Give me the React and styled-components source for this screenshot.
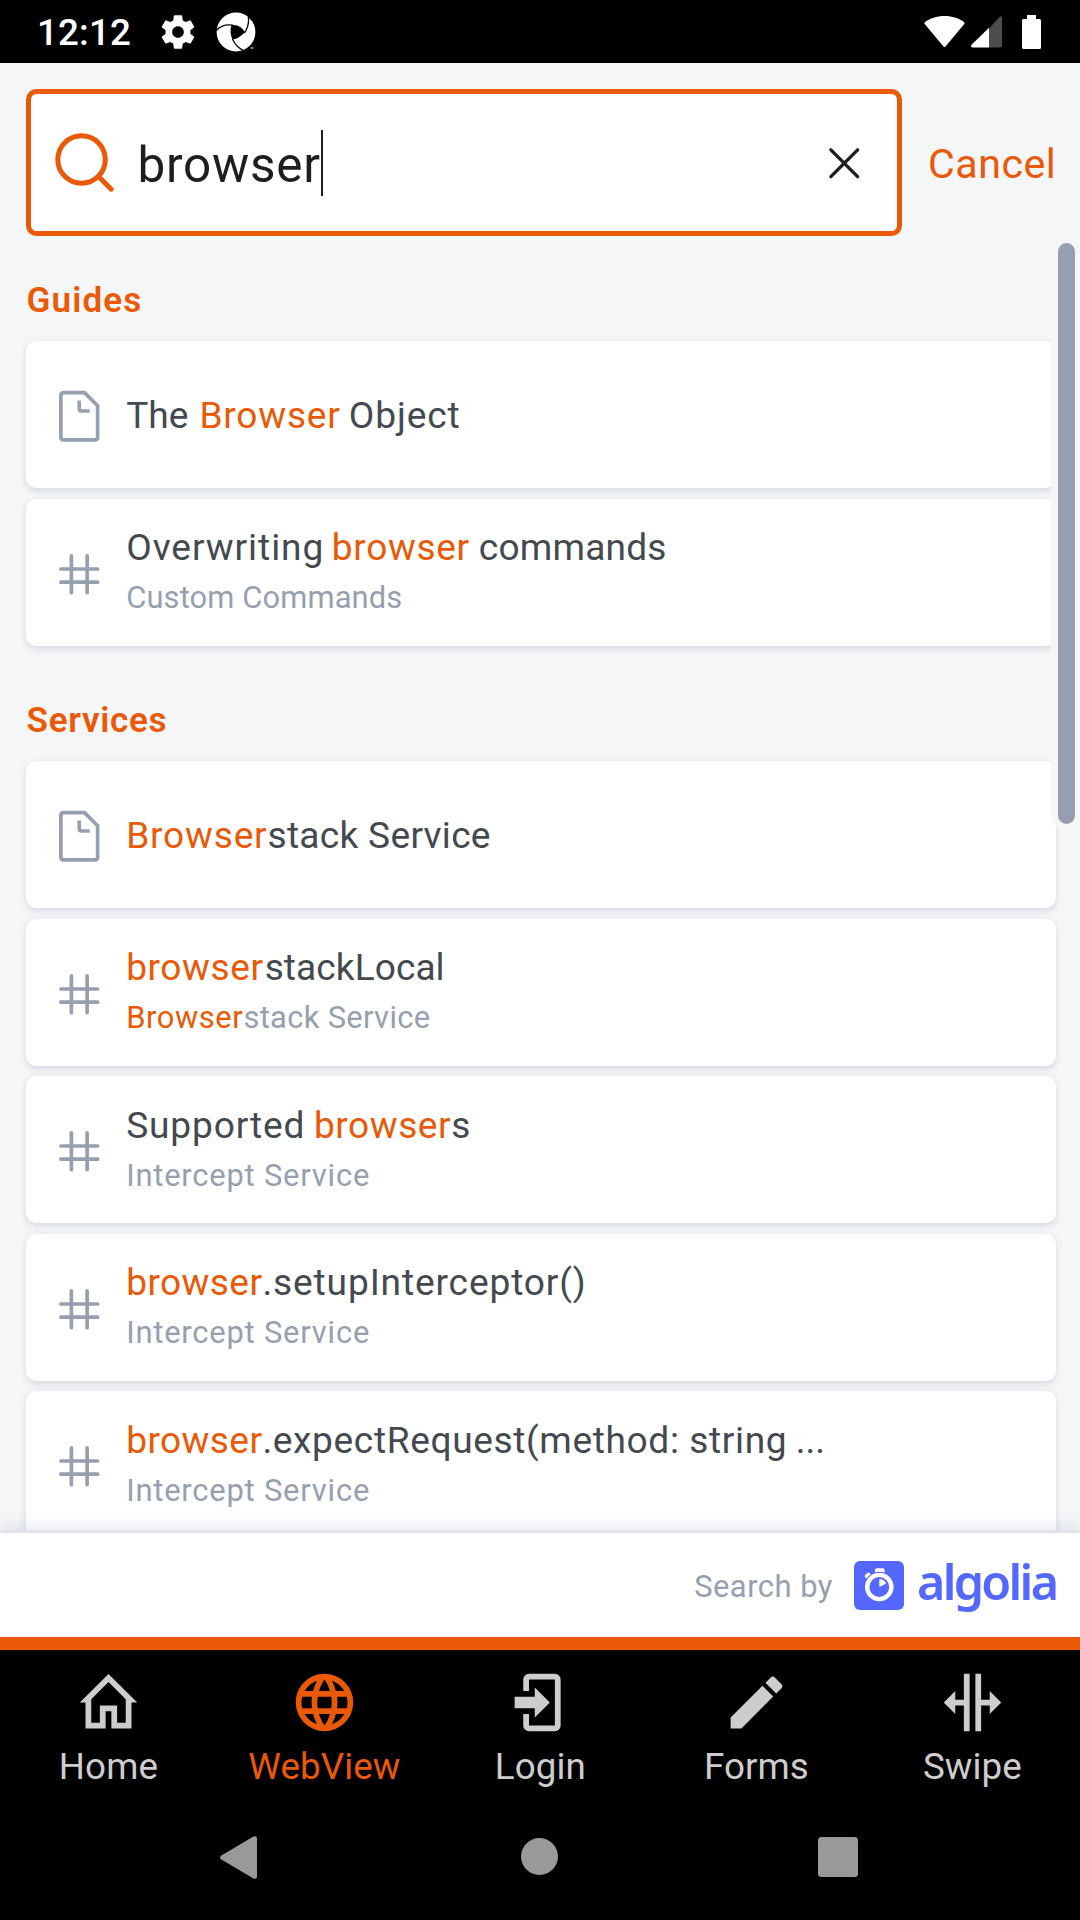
import React from "react";
import styled, { createGlobalStyle, ThemeProvider } from "styled-components";

const theme = {
  primary: "#ea5906",
  bg: "#f5f6f7",
  text: "#444950",
  ink: "#1c1e21",
  muted: "#969faf",
  brand: "#5468ff",
};

const GlobalStyle = createGlobalStyle`
  * { box-sizing: border-box; }
  body { margin: 0; background: #000; font-family: Roboto, "Liberation Sans", sans-serif; }
  svg { display: block; flex: none; }
`;

const Screen = styled.div`
  width: 1080px;
  height: 1920px;
  display: flex;
  flex-direction: column;
  overflow: hidden;
  background: ${(p) => p.theme.bg};
`;

/* ---------- status bar ---------- */

const StatusBar = styled.header`
  height: 63px;
  flex: none;
  display: flex;
  align-items: center;
  padding: 0 39px 0 37px;
  background: #000;
  color: #fff;
`;

const Clock = styled.span`
  width: 121px;
  padding-top: 3px;
  font-size: 36.75px;
  font-weight: 500;
  line-height: 40px;
  letter-spacing: 0.16px;
`;

const StatusIcons = styled.div`
  display: flex;
  align-items: center;
  gap: ${(p) => p.$gap}px;
  margin-left: ${(p) => (p.$end ? "auto" : 0)};
`;

const BatterySlot = styled.div`
  margin-left: 14px;
`;

/* ---------- search header ---------- */

const SearchHeader = styled.div`
  flex: none;
  display: flex;
  align-items: center;
  padding: 26px 0 0 26px;
`;

const SearchBox = styled.div`
  width: 876px;
  height: 147px;
  display: flex;
  align-items: center;
  padding: 0 27px 0 22px;
  border: 5px solid ${(p) => p.theme.primary};
  border-radius: 10.5px;
  background: #fff;
`;

const Query = styled.span`
  margin-left: 21.5px;
  padding-top: 5px;
  font-size: 49.5px;
  line-height: 66px;
  letter-spacing: 0.73px;
  color: ${(p) => p.theme.ink};
`;

const Caret = styled.i`
  width: 2px;
  height: 66px;
  background: ${(p) => p.theme.ink};
`;

const ClearButton = styled.button`
  display: flex;
  margin-left: auto;
  padding: 1px 0 0;
  border: 0;
  background: none;
  color: ${(p) => p.theme.ink};
`;

const CancelButton = styled.button`
  margin-left: 26px;
  padding: 3px 0 0;
  border: 0;
  background: none;
  font: 400 41.2px Roboto, sans-serif;
  letter-spacing: 0.5px;
  color: ${(p) => p.theme.primary};
`;

/* ---------- results ---------- */

const Results = styled.main`
  flex: 1;
  min-height: 0;
  position: relative;
  overflow: hidden;
  padding: 21px 24px 0 26px;
`;

const Section = styled.section`
  margin-bottom: 31.5px;
`;

const SectionTitle = styled.h2`
  margin: 0;
  height: 84px;
  padding: 1px 0 0 0.5px;
  font-size: 35.1px;
  line-height: 84px;
  font-weight: 600;
  letter-spacing: ${(p) => p.$track}px;
  color: ${(p) => p.theme.primary};
`;

const HitList = styled.div`
  display: flex;
  flex-direction: column;
  gap: 10.5px;
`;

const Hit = styled.article`
  height: 147px;
  flex: none;
  display: flex;
  align-items: center;
  padding-left: 26.8px;
  border-radius: 10.5px;
  background: #fff;
  box-shadow: 0 2.6px 7.9px 0 #d4d9e1;
`;

const HitIconBox = styled.div`
  padding-top: 4px;
  color: ${(p) => p.theme.muted};
`;

const HitText = styled.div`
  margin-left: 20.9px;
  padding-top: 2px;
  white-space: pre;
`;

const HitTitle = styled.div`
  padding-top: ${(p) => (p.$single ? 1 : 0)}px;
  font-size: 37.1px;
  line-height: 50px;
  color: ${(p) => p.theme.text};
`;

const HitPath = styled.div`
  font-size: 30.9px;
  line-height: 50px;
  color: ${(p) => p.theme.muted};
`;

const Run = styled.span`
  margin-left: ${(p) => p.$nudge || 0}px;
  letter-spacing: ${(p) => p.$track}px;
  color: ${(p) => (p.$mark ? p.theme.primary : "inherit")};
`;

const ScrollThumb = styled.div`
  position: absolute;
  top: 0;
  right: -1.5px;
  width: 30.5px;
  height: 595px;
  border: 7px solid ${(p) => p.theme.bg};
  border-radius: 16px;
  background: ${(p) => p.theme.muted};
`;

/* ---------- search footer ---------- */

const SearchFooter = styled.footer`
  height: 104px;
  flex: none;
  position: relative;
  z-index: 1;
  display: flex;
  align-items: center;
  justify-content: flex-end;
  padding-right: 24px;
  background: #fff;
  box-shadow: 0 -2.6px 0 0 #e0e3e8, 0 -7.9px 15.75px 0 rgba(69, 98, 155, 0.12);
`;

const SearchBy = styled.span`
  margin-right: 21px;
  padding-top: 2px;
  font-size: 30.9px;
  letter-spacing: 0.5px;
  color: ${(p) => p.theme.muted};
`;

const Wordmark = styled.span`
  width: 139px;
  margin-left: 13px;
  padding-bottom: 8px;
  font-family: "Noto Sans", "Open Sans", sans-serif;
  font-size: 48.5px;
  font-weight: 600;
  line-height: 60px;
  letter-spacing: -2.7px;
  color: ${(p) => p.theme.brand};
`;

/* ---------- bottom bars ---------- */

const TabBar = styled.nav`
  height: 157px;
  flex: none;
  display: grid;
  grid-template-columns: repeat(5, 1fr);
  border-top: 13px solid ${(p) => p.theme.primary};
  background: #000;
`;

const Tab = styled.div`
  display: flex;
  flex-direction: column;
  align-items: center;
  padding-top: 17.5px;
  font-size: 36.75px;
  line-height: 44px;
  letter-spacing: 0.1px;
  color: ${(p) => (p.$active ? p.theme.primary : "#cdcdcd")};
`;

const TabLabel = styled.span`
  margin: 8px 0 0 0.8px;
`;

const NavBar = styled.div`
  height: 126px;
  flex: none;
  display: grid;
  grid-template-columns: 301px 1fr 301px;
  align-items: center;
  padding-right: 2px;
  background: #000;
  color: #999;
`;

const NavButton = styled.div`
  display: flex;
  justify-content: ${(p) => p.$align};
  padding: ${(p) => p.$pad || 0};
`;

/* ---------- icons ---------- */

const GearIcon = () => (
  <svg width="40" height="40" viewBox="0 0 24 24" fill="#fff">
    <path d="M19.43 12.98c.04-.32.07-.64.07-.98s-.03-.66-.07-.98l2.11-1.65c.19-.15.24-.42.12-.64l-2-3.46c-.12-.22-.39-.3-.61-.22l-2.49 1c-.52-.4-1.08-.73-1.69-.98l-.38-2.65C14.46 2.18 14.25 2 14 2h-4c-.25 0-.46.18-.49.42l-.38 2.65c-.61.25-1.17.59-1.69.98l-2.49-1c-.23-.09-.49 0-.61.22l-2 3.46c-.13.22-.07.49.12.64l2.11 1.65c-.04.32-.07.65-.07.98s.03.66.07.98l-2.11 1.65c-.19.15-.24.42-.12.64l2 3.46c.12.22.39.3.61.22l2.49-1c.52.4 1.08.73 1.69.98l.38 2.65c.03.24.24.42.49.42h4c.25 0 .46-.18.49-.42l.38-2.65c.61-.25 1.17-.59 1.69-.98l2.49 1c.23.09.49 0 .61-.22l2-3.46c.12-.22.07-.49-.12-.64l-2.11-1.65zM12 15.5c-1.93 0-3.5-1.57-3.5-3.5s1.57-3.5 3.5-3.5 3.5 1.57 3.5 3.5-1.57 3.5-3.5 3.5z" />
  </svg>
);

const ApertureIcon = () => (
  <svg width="40" height="40" viewBox="0 0 40 40">
    <circle cx="20" cy="20" r="19.4" fill="#fff" />
    <path d="M15.4 13.2C21 12 26 15 28.9 20.2 25 24.5 21 26.8 16.6 27.6 14.3 23.2 13.9 18 15.4 13.2z" fill="#000" />
    <path d="M0 18.8C4 14 9.500 12.200 17 13.200M32.300 4.500C33.200 11 32 16 28.400 21M16.400 27C19 32.500 22.500 36.500 28.500 39" fill="none" stroke="#000" strokeWidth="1.300" />
    <path d="M33 3.500L36 9.500 33.200 6z" fill="#000" />
    <path d="M34.500 36h3" stroke="#fff" strokeWidth="1" />
  </svg>
);

const WifiIcon = () => (
  <svg width="41" height="33" viewBox="0 0 41 33">
    <path d="M20.5 1C12.800 1 5.500 3.400 .8 7.200Q0 8 .7 9L19.500 31.500Q20.500 32.500 21.500 31.500L40.300 9Q41 8 40.200 7.200C35.500 3.400 28.200 1 20.500 1z" fill="#fff" />
  </svg>
);

const CellIcon = () => (
  <svg width="31" height="32" viewBox="0 0 31 32">
    <path d="M18 12.500L28.200 1.200Q31 -1 31 2.500V29.500Q31 31.500 29 31.500H18z" fill="#4d4d4d" />
    <path d="M18 11.800V31.500H1.500Q-.8 31 .5 28.800z" fill="#fff" />
  </svg>
);

const BatteryIcon = () => (
  <svg width="19" height="34" viewBox="0 0 19 34">
    <path d="M5 0h9v4h3.500Q19 4 19 5.500v27Q19 34 17.500 34h-16Q0 34 0 32.500v-27Q0 4 1.500 4H5z" fill="#fff" />
  </svg>
);

const SearchIcon = () => (
  <svg width="63" height="63" viewBox="0 0 20 20" fill="none" stroke={theme.primary} strokeWidth="1.6" strokeLinecap="round" strokeLinejoin="round">
    <path d="M14.386 14.386l4.0877 4.0877-4.0877-4.0877c-2.9418 2.9419-7.7115 2.9419-10.6533 0-2.9419-2.9418-2.9419-7.7115 0-10.6533 2.9418-2.9419 7.7115-2.9419 10.6533 0 2.9419 2.9418 2.9419 7.7115 0 10.6533z" />
  </svg>
);

const ClearIcon = () => (
  <svg width="52.5" height="52.5" viewBox="0 0 20 20" fill="none" stroke="currentColor" strokeWidth="1.3" strokeLinecap="round">
    <path d="M4.910 4.910L15.090 15.090M15.090 4.910L4.910 15.090" />
  </svg>
);

const PageIcon = () => (
  <svg width="52.5" height="52.5" viewBox="0 0 20 20" fill="none" stroke="currentColor" strokeWidth="1.4" strokeLinejoin="round">
    <path d="M17 6v12c0 .52-.2 1-1 1H4c-.7 0-1-.33-1-1V2c0-.55.42-1 1-1h8l5 5zM14 8h-3.13c-.51 0-.87-.34-.87-.87V4" />
  </svg>
);

const HashIcon = () => (
  <svg width="52.5" height="52.5" viewBox="0 0 20 20" fill="none" stroke="currentColor" strokeWidth="1.4" strokeLinecap="round">
    <path d="M3 8h14M3 13h14M7 3v14M13 3v14" />
  </svg>
);

const StopwatchLogo = () => (
  <svg width="50" height="49" viewBox="0 0 50 49">
    <rect width="50" height="49" rx="6" fill={theme.brand} />
    <rect x="21" y="7.300" width="9.600" height="5.500" rx="1.600" fill="#fff" />
    <rect x="-3" y="-2.300" width="6" height="5" rx="1.500" fill="#fff" transform="translate(13.800 14.600) rotate(-45)" />
    <circle cx="25.300" cy="26" r="14" fill={theme.brand} stroke={theme.brand} strokeWidth="2.500" />
    <circle cx="25.300" cy="26" r="12.100" fill="none" stroke="#fff" strokeWidth="4.400" />
    <path d="M25.300 18v7.400q0 .7.600.3l6.300-3.300q-2-4.200-6.900-4.400z" fill="#fff" />
  </svg>
);

const TAB_PATHS = {
  Home: "M12 2.1L2 12h2v9h7v-6h2v6h7v-9h2L12 2.1zM9 19H6v-8.100l6-6 6 6V19h-3v-6H9v6z",
  WebView:
    "M16.36,14C16.44,13.34 16.5,12.68 16.5,12C16.5,11.32 16.44,10.66 16.36,10H19.74C19.9,10.64 20,11.31 20,12C20,12.69 19.9,13.36 19.74,14M14.59,19.56C15.19,18.45 15.65,17.25 15.97,16H18.92C17.96,17.65 16.43,18.93 14.59,19.56M14.34,14H9.66C9.56,13.34 9.5,12.68 9.5,12C9.5,11.32 9.56,10.65 9.66,10H14.34C14.43,10.65 14.5,11.32 14.5,12C14.5,12.68 14.43,13.34 14.34,14M12,19.96C11.17,18.76 10.5,17.43 10.09,16H13.91C13.5,17.43 12.83,18.76 12,19.96M8,8H5.08C6.03,6.34 7.57,5.06 9.4,4.44C8.8,5.55 8.35,6.75 8,8M5.08,16H8C8.35,17.25 8.8,18.45 9.4,19.56C7.57,18.93 6.03,17.65 5.08,16M4.26,14C4.1,13.36 4,12.69 4,12C4,11.31 4.1,10.64 4.26,10H7.64C7.56,10.66 7.5,11.32 7.5,12C7.5,12.68 7.56,13.34 7.64,14M12,4.03C12.83,5.23 13.5,6.57 13.91,8H10.09C10.5,6.57 11.17,5.23 12,4.03M18.92,8H15.97C15.65,6.75 15.19,5.55 14.59,4.44C16.43,5.07 17.96,6.34 18.92,8M12,2C6.47,2 2,6.5 2,12A10,10 0 0,0 12,22A10,10 0 0,0 22,12A10,10 0 0,0 12,2Z",
  Login:
    "M10,17.25V14H3V10H10V6.75L15.25,12L10,17.25M8,2H17A2,2 0 0,1 19,4V20A2,2 0 0,1 17,22H8A2,2 0 0,1 6,20V16H8V20H17V4H8V8H6V4A2,2 0 0,1 8,2Z",
  Forms:
    "M20.71,7.04C21.1,6.65 21.1,6 20.71,5.63L18.37,3.29C18,2.9 17.35,2.9 16.96,3.29L15.12,5.12L18.87,8.87M3,17.25V21H6.75L17.81,9.93L14.06,6.18L3,17.25Z",
  Swipe: "M9 2h2v20H9zM13 2h2v20h-2zM2 12l4-4v3h3v2H6v3zM22 12l-4-4v3h-3v2h3v3z",
};

const TabIcon = ({ name }) => (
  <svg width="69" height="69" viewBox="0 0 24 24" fill="currentColor">
    <path d={TAB_PATHS[name]} />
  </svg>
);

/* ---------- data: a run is [text, tracking, highlighted, nudge] ---------- */

const intercept = [["Intercept Service", 0.8]];

const SECTIONS = [
  {
    title: "Guides",
    track: 1.1,
    hits: [
      { title: [["The ", 0], ["Browser", 0.8, true, 1.8], [" Object", 0.9, false, -2]] },
      {
        title: [["Overwriting ", 0.95], ["browser", 0.65, true, -2.6], [" commands", 0.2, false, -0.4]],
        path: [["Custom Commands", 0.12]],
      },
    ],
  },
  {
    title: "Services",
    track: 0.72,
    hits: [
      { title: [["Browser", 0.8, true], ["stack Service", 0.3]] },
      {
        title: [["browser", 0.58, true], ["stackLocal", 0.07, false, 1]],
        path: [["Browser", 0.6, true], ["stack Service", 0.32]],
      },
      { title: [["Supported ", 0.85], ["browser", 0.55, true, -1.4], ["s", 0]], path: intercept },
      { title: [["browser", 0.4, true], [".setupInterceptor()", 0.88]], path: intercept },
      { title: [["browser", 0.4, true], [".expectRequest(method: string ", 0.63], ["...", 0, false, -1.4]], path: intercept },
    ],
  },
];

const Runs = ({ runs }) =>
  runs.map(([text, track, mark, nudge], i) => (
    <Run key={i} $track={track} $mark={mark} $nudge={nudge}>
      {text}
    </Run>
  ));

export default function App() {
  return (
    <ThemeProvider theme={theme}>
      <GlobalStyle />
      <Screen>
        <StatusBar>
          <Clock>12:12</Clock>
          <StatusIcons $gap={18}>
            <GearIcon />
            <ApertureIcon />
          </StatusIcons>
          <StatusIcons $gap={6} $end>
            <WifiIcon />
            <CellIcon />
            <BatterySlot>
              <BatteryIcon />
            </BatterySlot>
          </StatusIcons>
        </StatusBar>

        <SearchHeader>
          <SearchBox>
            <SearchIcon />
            <Query>browser</Query>
            <Caret />
            <ClearButton>
              <ClearIcon />
            </ClearButton>
          </SearchBox>
          <CancelButton>Cancel</CancelButton>
        </SearchHeader>

        <Results>
          {SECTIONS.map((section) => (
            <Section key={section.title}>
              <SectionTitle $track={section.track}>{section.title}</SectionTitle>
              <HitList>
                {section.hits.map((hit, i) => (
                  <Hit key={i}>
                    <HitIconBox>{hit.path ? <HashIcon /> : <PageIcon />}</HitIconBox>
                    <HitText>
                      <HitTitle $single={!hit.path}>
                        <Runs runs={hit.title} />
                      </HitTitle>
                      {hit.path && (
                        <HitPath>
                          <Runs runs={hit.path} />
                        </HitPath>
                      )}
                    </HitText>
                  </Hit>
                ))}
              </HitList>
            </Section>
          ))}
          <ScrollThumb />
        </Results>

        <SearchFooter>
          <SearchBy>Search by</SearchBy>
          <StopwatchLogo />
          <Wordmark>algolia</Wordmark>
        </SearchFooter>

        <TabBar>
          {Object.keys(TAB_PATHS).map((name) => (
            <Tab key={name} $active={name === "WebView"}>
              <TabIcon name={name} />
              <TabLabel>{name}</TabLabel>
            </Tab>
          ))}
        </TabBar>

        <NavBar>
          <NavButton $align="flex-end" $pad="0 44px 0 0">
            <svg width="37" height="43" viewBox="0 0 37 43" fill="currentColor">
              <path d="M1 19.700L33.500.5Q37-.8 37 2.500v38Q37 43.800 33.500 42.500L1 23.300Q-1 21.500 1 19.700z" />
            </svg>
          </NavButton>
          <NavButton $align="center">
            <svg width="38" height="38" viewBox="0 0 38 38" fill="currentColor">
              <circle cx="19.500" cy="18.500" r="18.500" />
            </svg>
          </NavButton>
          <NavButton $align="flex-start" $pad="0 0 0 41px">
            <svg width="40" height="40" viewBox="0 0 40 40" fill="currentColor">
              <rect width="40" height="40" rx="3.500" />
            </svg>
          </NavButton>
        </NavBar>
      </Screen>
    </ThemeProvider>
  );
}
